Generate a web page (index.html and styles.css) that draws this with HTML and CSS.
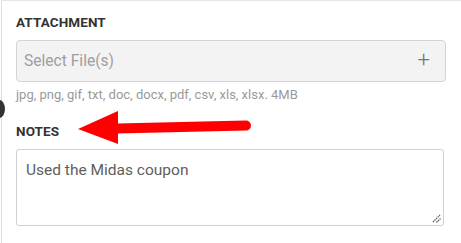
FILE: index.html
```html
<!DOCTYPE html>
<html>
<head>
<meta charset="utf-8">
<link rel="stylesheet" href="styles.css">
</head>
<body>
<div class="knob"></div>
<div class="panel">
  <section class="field">
    <h3 class="label">ATTACHMENT</h3>
    <div class="file-select">
      <span class="placeholder">Select File(s)</span>
      <span class="plus">+</span>
    </div>
    <p class="hint">jpg, png, gif, txt, doc, docx, pdf, csv, xls, xlsx. 4MB</p>
  </section>
  <section class="field notes">
    <h3 class="label">NOTES</h3>
    <div class="textarea">Used the Midas coupon
      <svg class="grip" width="9" height="9" viewBox="0 0 9 9"><path d="M1 8 L8 1 M4.5 8.5 L8.5 4.5" stroke="#555" stroke-width="1.3" stroke-dasharray="1.4 0.8"/></svg>
    </div>
  </section>
</div>
<svg class="arrow" width="461" height="243" viewBox="0 0 461 243">
  <path d="M117 128.5 L246 125.5" stroke="#ff0000" stroke-width="10" stroke-linecap="round" fill="none"/>
  <polygon points="78,129 118,111 118,144" fill="#ff0000"/>
</svg>
</body>
</html>
```
FILE: styles.css
```css
* { box-sizing: border-box; }
html, body { margin: 0; padding: 0; background: #fff; }
body {
  width: 461px;
  height: 243px;
  overflow: hidden;
  position: relative;
  font-family: Roboto, "Liberation Sans", sans-serif;
}
.panel {
  margin-left: 1px;
  border-left: 1px solid #dedede;
  border-top: 1px solid #e6e6e6;
  height: 243px;
  padding: 13px 15px 0 14px;
}
.label {
  margin: 0;
  font-size: 13.5px;
  font-weight: 700;
  color: #333;
  line-height: 16px;
  letter-spacing: 0.1px;
}
.file-select {
  margin-top: 10px;
  height: 42px;
  background: #f3f3f3;
  border: 1px solid #d4d4d4;
  border-radius: 4px;
  display: flex;
  align-items: center;
  justify-content: space-between;
  padding: 0 15px 0 7px;
}
.placeholder {
  font-size: 15.6px;
  color: #9e9e9e;
}
.plus {
  font-size: 22px;
  font-weight: 300;
  color: #777;
  line-height: 1;
  margin-top: -3px;
}
.hint {
  margin: 5px 0 0;
  font-size: 13px;
  color: #9a9a9a;
  line-height: 15px;
}
.notes { margin-top: 21px; }
.textarea {
  position: relative;
  margin-top: 10px;
  margin-right: 2px;
  height: 77px;
  border: 1px solid #d0d0d0;
  border-radius: 3px;
  padding: 10px 9px;
  font-size: 15.5px;
  line-height: 20px;
  color: #5e5e5e;
}
.grip {
  position: absolute;
  right: 2px;
  bottom: 2px;
}
.knob {
  position: absolute;
  left: -6px;
  top: 100px;
  width: 11px;
  height: 18px;
  border-radius: 50%;
  background: #333;
}
.arrow {
  position: absolute;
  left: 0;
  top: 0;
  pointer-events: none;
}
```
